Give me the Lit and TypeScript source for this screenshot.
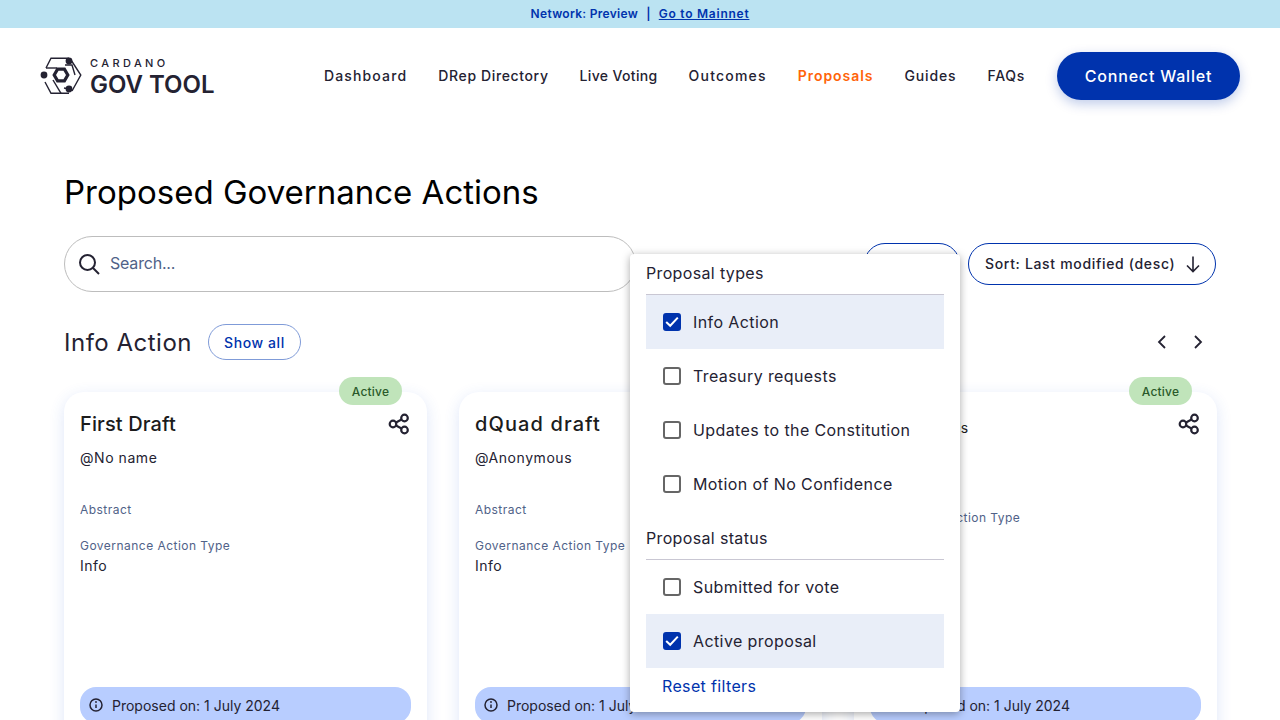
import { LitElement, html, css, svg } from "lit";
import { customElement } from "lit/decorators.js";
import { classMap } from "lit/directives/class-map.js";

// spacing per label: the installed font runs narrower than the one in the design
const navItems = [
  { label: "Dashboard", spacing: 1.15 },
  { label: "DRep Directory", spacing: 0.63 },
  { label: "Live Voting", spacing: 0.35 },
  { label: "Outcomes", spacing: 1.2 },
  { label: "Proposals", spacing: 0.95 },
  { label: "Guides", spacing: 0.87 },
  { label: "FAQs", spacing: 0.7 },
];

const proposalTypes = [
  { label: "Info Action", checked: true },
  { label: "Treasury requests", checked: false },
  { label: "Updates to the Constitution", checked: false },
  { label: "Motion of No Confidence", checked: false },
];

const proposalStatus = [
  { label: "Submitted for vote", checked: false },
  { label: "Active proposal", checked: true },
];

const cards = [
  { title: "First Draft", author: "@No name", compact: false, spacing: 0.12 },
  { title: "dQuad draft", author: "@Anonymous", compact: false, spacing: 1.1 },
  { title: "Test proposals", author: "", compact: true, spacing: 0.08 },
];

const logoIcon = svg`
  <svg width="42" height="38" viewBox="0 0 42 38" fill="none" stroke="#242232" stroke-width="1.4">
    <path d="M6 11 L11 1.2 H29" />
    <path d="M31 3 L40.8 18 L32 34" />
    <path d="M29 36.3 H11 L5 25" />
    <path d="M6 11 H17" />
    <path d="M13 23 L21 36.3" />
    <path d="M24 31 L29 32" />
    <path d="M25 8 L32 8 L35 18" />
    <path d="M14.2 18 L17.6 12.2 H24.4 L27.8 18 L24.4 23.8 H17.6 Z" stroke-width="3.2" />
    <circle cx="29" cy="4" r="3.4" fill="#242232" stroke="none" />
    <circle cx="4" cy="18" r="3.4" fill="#242232" stroke="none" />
    <circle cx="29" cy="32" r="3.4" fill="#242232" stroke="none" />
  </svg>
`;

const shareIcon = svg`
  <svg class="share" width="22" height="22" viewBox="0 0 22 22" fill="none" stroke="#242232" stroke-width="2.2">
    <circle cx="16.5" cy="5" r="3.3" />
    <circle cx="5" cy="11" r="3.3" />
    <circle cx="16.5" cy="17" r="3.3" />
    <path d="M8 9.4 L13.5 6.6 M8 12.6 L13.5 15.4" />
  </svg>
`;

const infoIcon = svg`
  <svg width="16" height="16" viewBox="0 0 16 16" fill="none" stroke="#242232" stroke-width="1.5">
    <circle cx="8" cy="8" r="6" />
    <path d="M8 7.4 V11" />
    <circle cx="8" cy="5" r="0.9" fill="#242232" stroke="none" />
  </svg>
`;

@customElement("app-root")
export class AppRoot extends LitElement {
  static styles = css`
    :host {
      display: block;
      height: 720px;
      overflow: hidden;
      background: #fff;
      font-family: Inter, "Noto Sans", sans-serif;
      color: #242232;
    }

    .banner {
      height: 28px;
      box-sizing: border-box;
      padding-bottom: 2px;
      background: #bbe3f2;
      display: flex;
      align-items: center;
      justify-content: center;
      gap: 8px;
      font-size: 12px;
      font-weight: 600;
      letter-spacing: 0.3px;
      color: #0033ad;
    }

    .banner a {
      color: #0033ad;
      text-decoration: underline;
      letter-spacing: 0.75px;
    }

    header {
      height: 96px;
      box-sizing: border-box;
      padding: 0 40px;
      display: flex;
      align-items: center;
      justify-content: space-between;
    }

    .logo {
      display: flex;
      align-items: center;
      gap: 8px;
    }

    .logo-text {
      display: flex;
      flex-direction: column;
      padding-top: 4px;
    }

    .logo-top {
      font-size: 11px;
      line-height: 13px;
      letter-spacing: 3.4px;
      font-weight: 500;
    }

    .logo-bottom {
      font-size: 24px;
      line-height: 29px;
      font-weight: 600;
    }

    nav {
      display: flex;
      align-items: center;
      gap: 31px;
    }

    nav a {
      font-size: 14px;
      font-weight: 500;
      padding-bottom: 2px;
    }

    nav a.current {
      color: #ff640a;
      font-weight: 600;
    }

    .connect {
      margin-left: 1px;
      width: 183px;
      height: 48px;
      border-radius: 24px;
      background: #0033ad;
      color: #fff;
      display: flex;
      align-items: center;
      justify-content: center;
      font-size: 16px;
      font-weight: 500;
      letter-spacing: 0.8px;
      box-shadow: 0 4px 12px rgba(0, 51, 173, 0.25);
    }

    main {
      padding: 44px 64px 0;
    }

    h1 {
      margin: 0;
      font-size: 33px;
      line-height: 48px;
      font-weight: 400;
      color: #000;
    }

    .toolbar {
      margin-top: 20px;
      height: 56px;
      display: flex;
      align-items: center;
      justify-content: space-between;
    }

    .search {
      width: 572px;
      height: 56px;
      box-sizing: border-box;
      border: 1px solid #bdbdbd;
      border-radius: 28px;
      padding: 0 12px;
      display: flex;
      align-items: center;
      gap: 9px;
      font-size: 16px;
      color: #506288;
    }

    .search span {
      padding-bottom: 2px;
      letter-spacing: -0.2px;
    }

    .actions {
      display: flex;
      gap: 8px;
    }

    .filter-wrap {
      position: relative;
    }

    .outline {
      height: 42px;
      box-sizing: border-box;
      border: 1px solid #0033ad;
      border-radius: 21px;
      display: flex;
      align-items: center;
      font-size: 14px;
      font-weight: 500;
    }

    .filter {
      width: 96px;
      justify-content: center;
    }

    .sort {
      width: 248px;
      padding: 0 12px 0 16px;
      justify-content: space-between;
      letter-spacing: 0.67px;
    }

    .sort span {
      padding-bottom: 2px;
    }

    .popup {
      position: absolute;
      top: 11px;
      right: 0;
      z-index: 2;
      width: 330px;
      height: 458px;
      box-sizing: border-box;
      padding: 0 16px;
      background: #fff;
      border-radius: 4px;
      box-shadow: 0 2px 8px rgba(0, 0, 0, 0.35);
    }

    .popup-head {
      height: 41px;
      box-sizing: border-box;
      padding-bottom: 2px;
      display: flex;
      align-items: center;
      font-size: 16px;
      border-bottom: 1px solid #c9c7d3;
      letter-spacing: 0.35px;
    }

    .popup-head.second {
      margin-top: 8px;
    }

    .option {
      height: 54px;
      display: flex;
      align-items: center;
      gap: 12px;
      padding-left: 17px;
      font-size: 16px;
      letter-spacing: 0.4px;
    }

    .option span.text {
      padding-bottom: 1px;
    }

    .option.checked {
      background: #e9eef8;
    }

    .box {
      width: 18px;
      height: 18px;
      box-sizing: border-box;
      border: 2px solid #666;
      border-radius: 3px;
    }

    .checked .box {
      background: #0033ad;
      border-color: #0033ad;
      display: flex;
      align-items: center;
      justify-content: center;
    }

    .reset {
      padding: 0 0 1px 16px;
      height: 36px;
      box-sizing: border-box;
      display: flex;
      align-items: center;
      font-size: 16px;
      color: #0033ad;
      letter-spacing: 0.35px;
    }

    .section {
      margin-top: 32px;
      height: 36px;
      display: flex;
      align-items: center;
      gap: 16px;
    }

    h2 {
      margin: 0;
      font-size: 24px;
      font-weight: 400;
      letter-spacing: 0.5px;
    }

    .show-all {
      width: 93px;
      height: 36px;
      box-sizing: border-box;
      border: 1px solid #7f9bd8;
      border-radius: 18px;
      display: flex;
      align-items: center;
      justify-content: center;
      font-size: 14px;
      font-weight: 500;
      letter-spacing: 0.6px;
      color: #0033ad;
    }

    .arrows {
      margin-left: auto;
      padding-right: 6px;
      display: flex;
      gap: 12px;
    }

    .cards {
      margin-top: 32px;
      display: flex;
      gap: 32px;
    }

    .card {
      position: relative;
      flex: none;
      width: 363px;
      height: 363px;
      box-sizing: border-box;
      padding: 16px;
      background: #fff;
      border-radius: 20px;
      box-shadow: 0 4px 15px rgba(47, 98, 220, 0.16);
      display: flex;
      flex-direction: column;
    }

    .status {
      position: absolute;
      top: -15px;
      right: 25px;
      width: 63px;
      height: 28px;
      border-radius: 14px;
      background: #c0e4ba;
      color: #2a5a2a;
      display: flex;
      align-items: center;
      justify-content: center;
      font-size: 12px;
      font-weight: 500;
      letter-spacing: 0.2px;
    }

    .card-top {
      display: flex;
      align-items: flex-start;
      justify-content: space-between;
    }

    .share {
      margin: 5px 1px 0 0;
    }

    .card-title {
      font-size: 20px;
      line-height: 32px;
      font-weight: 500;
      color: #1c1c1c;
    }

    .compact .card-title {
      font-size: 14px;
      font-weight: 400;
      line-height: 40px;
    }

    .author {
      margin-top: 8px;
      font-size: 14px;
      line-height: 20px;
      letter-spacing: 0.55px;
    }

    .label {
      font-size: 12px;
      line-height: 18px;
      letter-spacing: 0.47px;
      color: #506288;
    }

    .abstract {
      margin-top: 33px;
    }

    .type {
      margin-top: 18px;
    }

    .compact .type {
      margin-top: 61px;
    }

    .value {
      font-size: 14px;
      line-height: 22px;
      letter-spacing: 0.5px;
    }

    .proposed {
      margin-top: auto;
      margin-bottom: 16px;
      height: 36px;
      flex: none;
      background: #b8cdff;
      border-radius: 16px;
      padding: 0 8px;
      display: flex;
      align-items: center;
      gap: 8px;
      font-size: 14px;
    }
  `;

  renderOption(o: { label: string; checked: boolean }) {
    return html`
      <div class=${classMap({ option: true, checked: o.checked })}>
        <span class="box">
          ${o.checked
            ? html`<svg width="14" height="14" viewBox="0 0 14 14" fill="none" stroke="#fff" stroke-width="2"><path d="M1.2 7 L5.2 10.8 L12.8 2.6" /></svg>`
            : ""}
        </span>
        <span class="text">${o.label}</span>
      </div>
    `;
  }

  renderCard(c: { title: string; author: string; compact: boolean; spacing: number }) {
    return html`
      <article class=${classMap({ card: true, compact: c.compact })}>
        <span class="status">Active</span>
        <div class="card-top">
          <div class="card-title" style="letter-spacing: ${c.spacing}px">${c.title}</div>
          ${shareIcon}
        </div>
        ${c.compact
          ? ""
          : html`
              <div class="author">${c.author}</div>
              <div class="label abstract">Abstract</div>
            `}
        <div class="label type">Governance Action Type</div>
        <div class="value">Info</div>
        <div class="proposed">${infoIcon} Proposed on: 1 July 2024</div>
      </article>
    `;
  }

  render() {
    return html`
      <div class="banner">
        <span>Network: Preview</span><span>|</span><a>Go to Mainnet</a>
      </div>
      <header>
        <div class="logo">
          ${logoIcon}
          <div class="logo-text">
            <span class="logo-top">CARDANO</span>
            <span class="logo-bottom">GOV TOOL</span>
          </div>
        </div>
        <nav>
          ${navItems.map(
            (n) => html`<a class=${n.label === "Proposals" ? "current" : ""} style="letter-spacing: ${n.spacing}px">${n.label}</a>`
          )}
          <span class="connect">Connect Wallet</span>
        </nav>
      </header>
      <main>
        <h1>Proposed Governance Actions</h1>
        <div class="toolbar">
          <div class="search">
            <svg width="24" height="24" viewBox="0 0 24 24" fill="none" stroke="#242232" stroke-width="2">
              <circle cx="10.5" cy="10.5" r="7.5" />
              <path d="M16 16 L22 22" />
            </svg>
            <span>Search...</span>
          </div>
          <div class="actions">
            <div class="filter-wrap">
              <div class="outline filter">Filter</div>
              <div class="popup">
                <div class="popup-head">Proposal types</div>
                ${proposalTypes.map((o) => this.renderOption(o))}
                <div class="popup-head second">Proposal status</div>
                ${proposalStatus.map((o) => this.renderOption(o))}
                <div class="reset">Reset filters</div>
              </div>
            </div>
            <div class="outline sort">
              <span>Sort: Last modified (desc)</span>
              <svg width="20" height="20" viewBox="0 0 20 20" fill="none" stroke="#242232" stroke-width="1.6">
                <path d="M10 2.5 V17.5 M4 11.5 L10 17.5 L16 11.5" />
              </svg>
            </div>
          </div>
        </div>
        <div class="section">
          <h2>Info Action</h2>
          <span class="show-all">Show all</span>
          <div class="arrows">
            <svg width="24" height="24" viewBox="0 0 24 24" fill="none" stroke="#242232" stroke-width="1.8"><path d="M15 6 L9 12 L15 18" /></svg>
            <svg width="24" height="24" viewBox="0 0 24 24" fill="none" stroke="#242232" stroke-width="1.8"><path d="M9 6 L15 12 L9 18" /></svg>
          </div>
        </div>
        <div class="cards">${cards.map((c) => this.renderCard(c))}</div>
      </main>
    `;
  }
}
